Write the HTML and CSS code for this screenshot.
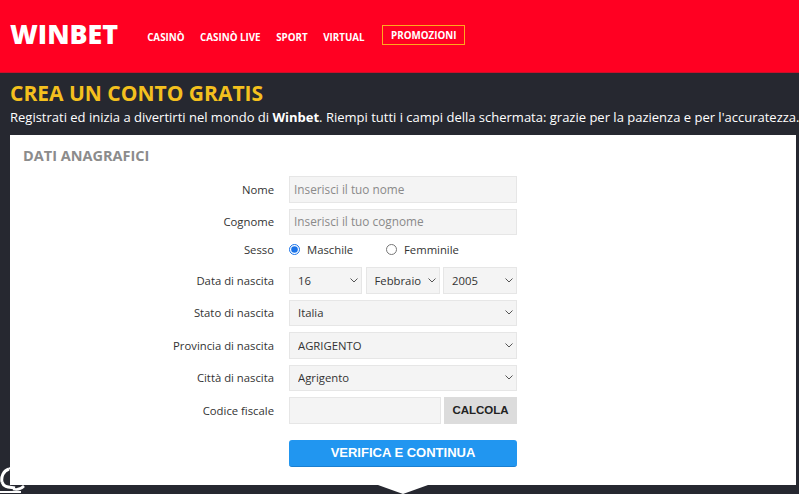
FILE: index.html
```html
<!DOCTYPE html>
<html lang="it">
<head>
  <meta charset="UTF-8" />
  <title>Registrazione - Winbet</title>
  <link rel="stylesheet" href="styles.css">
</head>
<body>
  <header class="topbar">
    <a class="logo" href="#">WINBET</a>
    <ul class="menu">
      <li><a href="#">CASINÒ</a></li>
      <li><a href="#">CASINÒ LIVE</a></li>
      <li><a href="#">SPORT</a></li>
      <li class="before-promo"><a href="#">VIRTUAL</a></li>
      <li><a class="promo" href="#">PROMOZIONI</a></li>
    </ul>
  </header>

  <main class="page">
    <h1>CREA UN CONTO GRATIS</h1>
    <p class="intro">Registrati ed inizia a divertirti nel mondo di <b>Winbet</b>. Riempi tutti i campi della schermata: grazie per la pazienza e per l'accuratezza.</p>

    <section class="card">
      <h2>DATI ANAGRAFICI</h2>
      <form class="form">
        <label>Nome</label>
        <input class="field" type="text" placeholder="Inserisci il tuo nome">

        <label>Cognome</label>
        <input class="field" type="text" placeholder="Inserisci il tuo cognome">

        <label class="up">Sesso</label>
        <div class="radios up">
          <span class="radio"><input type="radio" name="sesso" checked> Maschile</span>
          <span class="radio"><input type="radio" name="sesso"> Femminile</span>
        </div>

        <label>Data di nascita</label>
        <div class="date">
          <select class="field"><option>16</option></select>
          <select class="field"><option>Febbraio</option></select>
          <select class="field"><option>2005</option></select>
        </div>

        <label>Stato di nascita</label>
        <select class="field"><option>Italia</option></select>

        <label>Provincia di nascita</label>
        <select class="field"><option>AGRIGENTO</option></select>

        <label>Città di nascita</label>
        <select class="field"><option>Agrigento</option></select>

        <label>Codice fiscale</label>
        <div class="cf">
          <input class="field" type="text">
          <button class="calc" type="button">CALCOLA</button>
        </div>

        <button class="submit" type="button">VERIFICA E CONTINUA</button>
      </form>
    </section>
  </main>

  <svg class="chat" width="34" height="34" viewBox="0 0 34 34" fill="none" stroke="#fff">
    <path d="M10 7C4 9 2 15 3 20" stroke-width="3"/>
    <path d="M3 20C5 26 11 25 16 26" stroke-width="3"/>
    <path d="M10 7C12 5 14 5 15 6" stroke-width="2"/>
    <path d="M14 27C18 28 22 27 25 24" stroke-width="2.5"/>
    <path d="M1 30H22" stroke-width="2"/>
  </svg>
</body>
</html>
```

FILE: styles.css
```css
* {
  box-sizing: border-box;
}

body {
  margin: 0;
  background: #262830;
  font-family: "Open Sans", Arial, sans-serif;
  color: #333;
  overflow: hidden;
  height: 494px;
}

.topbar {
  display: flex;
  align-items: flex-start;
  height: 73px;
  padding: 14px 0 0 10px;
  background: #ff0022;
  border-bottom: 1px solid #c8102a;
}

.logo {
  color: white;
  text-decoration: none;
  font-size: 26.8px;
  line-height: 40px;
  font-weight: 800;
}

.menu {
  display: flex;
  align-items: center;
  list-style: none;
  margin: 10px 0 0 29px;
  padding: 0;
}

.menu li {
  margin-right: 15.5px;
}

.menu .before-promo {
  margin-right: 17.5px;
}

.menu a {
  color: white;
  text-decoration: none;
  font-size: 9.8px;
  font-weight: 700;
}

.menu .promo {
  display: block;
  padding: 2.5px 8px;
  border: 1px solid #ffa81e;
}

.page {
  position: relative;
  padding: 6px 3px 0 10px;
}

h1 {
  margin: 0;
  color: #f4c01e;
  font-size: 21px;
  line-height: 28px;
  font-weight: 700;
}

.intro {
  margin: 0;
  color: white;
  font-size: 13px;
  line-height: 20px;
  white-space: nowrap;
}

.card {
  position: relative;
  height: 350px;
  margin-top: 8px;
  padding: 11px 13px;
  background: white;
}

/* triangolo sotto la card */
.card::after {
  content: "";
  position: absolute;
  left: 368px;
  top: 350px;
  border-left: 25px solid transparent;
  border-right: 25px solid transparent;
  border-top: 9px solid white;
}

h2 {
  margin: 0;
  color: #8c8c8c;
  font-size: 14.5px;
  line-height: 20px;
  font-weight: 700;
}

.form {
  display: grid;
  grid-template-columns: 251px 228px;
  grid-template-rows: 26.5px 26.5px 20px repeat(5, 26.5px) auto;
  column-gap: 15px;
  row-gap: 6px;
  margin-top: 10px;
}

.form label {
  align-self: center;
  text-align: right;
  font-size: 11.3px;
}

.form .up {
  margin-bottom: 4px;
}

.field {
  width: 100%;
  height: 100%;
  padding: 0 4px;
  background-color: #f4f4f4;
  border: 1px solid #e6e6e6;
  border-radius: 0;
  color: #333;
  font-family: inherit;
  font-size: 11.3px;
}

input.field::placeholder {
  color: #8a8a8a;
  font-size: 11.8px;
}

select.field {
  appearance: none;
  padding-left: 8px;
  background-image: url("data:image/svg+xml,%3Csvg xmlns='http://www.w3.org/2000/svg' width='8' height='5'%3E%3Cpath d='M.5.5 4 4 7.5.5' fill='none' stroke='%23555'/%3E%3C/svg%3E");
  background-repeat: no-repeat;
  background-position: right 3px center;
}

.radios {
  display: flex;
  align-items: center;
  font-size: 11.3px;
}

.radio {
  display: flex;
  align-items: center;
  gap: 7px;
  width: 97px;
}

.radio input {
  width: 11px;
  height: 11px;
  margin: 0;
  accent-color: #1a73e8;
}

.date {
  display: grid;
  grid-template-columns: 73px 74px 74px;
  gap: 3.5px;
}

.cf {
  display: flex;
  gap: 3px;
}

.cf .field {
  width: 152px;
}

.calc {
  width: 73px;
  background: #dcdcdc;
  border: none;
  color: #222;
  font-family: "Liberation Sans", Arial, sans-serif;
  font-size: 11.5px;
  font-weight: 700;
}

.submit {
  grid-column: 2;
  height: 27px;
  margin-top: 10px;
  background: #2196f0;
  border: none;
  border-bottom: 1px solid #1a7fd0;
  border-radius: 3px;
  color: white;
  font-family: "Liberation Sans", Arial, sans-serif;
  font-size: 13px;
  font-weight: 700;
}

.chat {
  position: absolute;
  left: -1px;
  top: 462px;
}
```
